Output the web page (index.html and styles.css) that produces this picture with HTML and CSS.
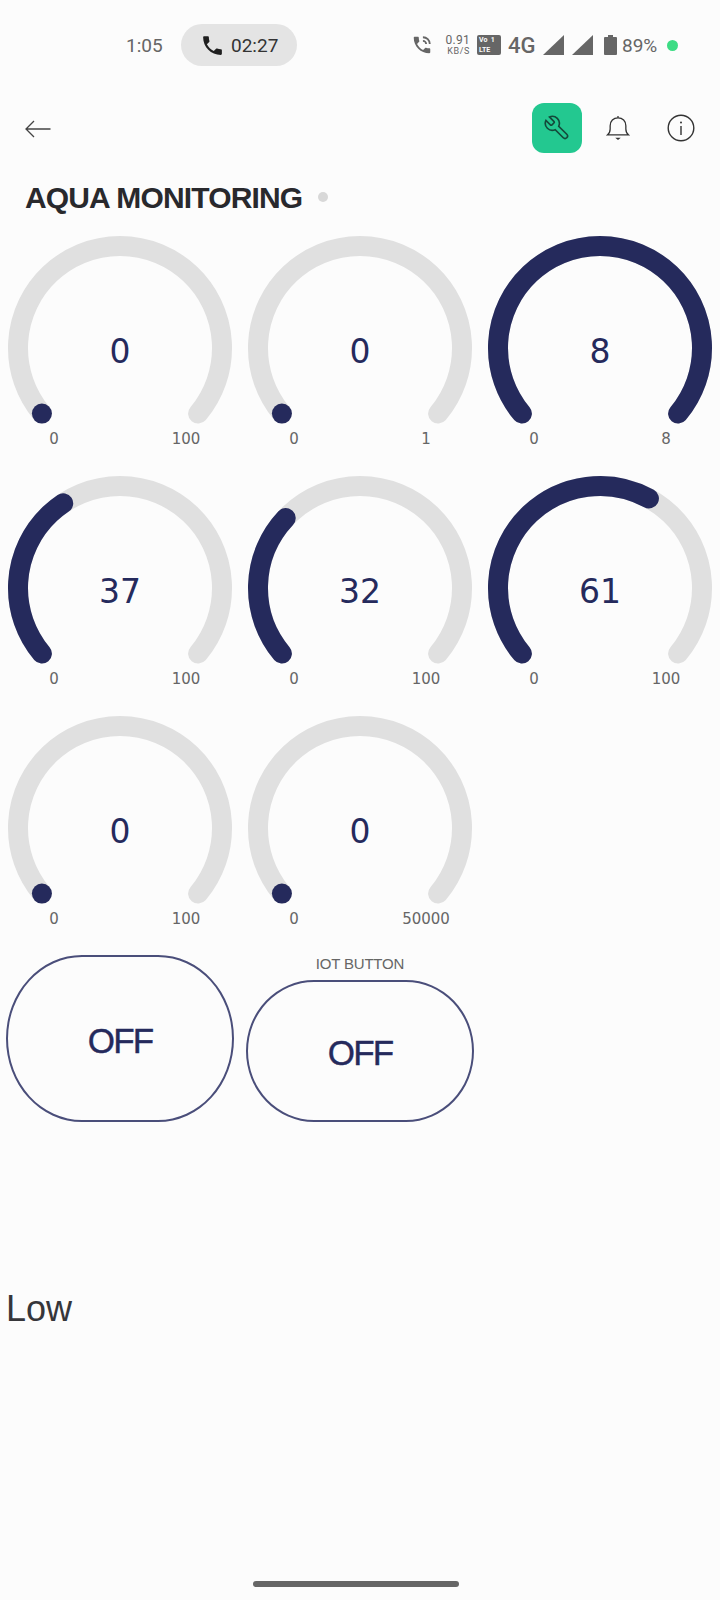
FILE: index.html
```html
<!DOCTYPE html>
<html lang="en">
<head>
    <meta charset="UTF-8">
    <meta name="viewport" content="width=device-width, initial-scale=1.0">
    <title>Aqua Monitoring</title>
    <link rel="stylesheet" href="styles.css">
</head>
<body>
    <div class="status-bar">
        <span class="clock">1:05</span>
        <div class="call-pill">
            <svg class="call-icon" viewBox="0 0 24 24"><path d="M6.62 10.79c1.44 2.83 3.76 5.14 6.59 6.59l2.2-2.2c.27-.27.67-.36 1.02-.24 1.12.37 2.33.57 3.57.57.55 0 1 .45 1 1V20c0 .55-.45 1-1 1-9.39 0-17-7.61-17-17 0-.55.45-1 1-1h3.5c.55 0 1 .45 1 1 0 1.25.2 2.45.57 3.57.11.35.03.74-.25 1.02l-2.2 2.2z"/></svg>
            <span>02:27</span>
        </div>
        <div class="status-right">
            <svg class="wifi-call" viewBox="0 0 24 24">
                <path d="M6.62 10.79c1.44 2.83 3.76 5.14 6.59 6.59l2.2-2.2c.27-.27.67-.36 1.02-.24 1.12.37 2.33.57 3.57.57.55 0 1 .45 1 1V20c0 .55-.45 1-1 1-9.39 0-17-7.61-17-17 0-.55.45-1 1-1h3.5c.55 0 1 .45 1 1 0 1.25.2 2.45.57 3.57.11.35.03.74-.25 1.02l-2.2 2.2z"/>
                <path class="wifi-arc" d="M13 3.5a7.5 7.5 0 0 1 7.5 7.5M13 7.5a3.5 3.5 0 0 1 3.5 3.5"/>
            </svg>
            <div class="net-speed"><span>0.91</span><small>KB/S</small></div>
            <div class="volte"><span>Vo&nbsp;&nbsp;1</span><span>LTE</span></div>
            <span class="net-type">4G</span>
            <svg class="signal" viewBox="0 0 21 20"><path d="M21 0v20H0z"/></svg>
            <svg class="signal" viewBox="0 0 21 20"><path d="M21 0v20H0z"/></svg>
            <svg class="battery" viewBox="0 0 13 20"><path d="M4 0h5v2h3a1 1 0 0 1 1 1v16a1 1 0 0 1-1 1H1a1 1 0 0 1-1-1V3a1 1 0 0 1 1-1h3z"/></svg>
            <span class="battery-level">89%</span>
            <span class="green-dot"></span>
        </div>
    </div>

    <div class="top-bar">
        <svg class="back-icon" viewBox="0 0 26 18"><path d="M25.5 9H1M9 1L1 9l8 8"/></svg>
        <div class="top-actions">
            <div class="wrench-btn">
                <svg viewBox="0 0 24 24"><g transform="translate(24 0) scale(-1 1)"><path d="M14.7 6.3a1 1 0 0 0 0 1.4l1.6 1.6a1 1 0 0 0 1.4 0l3.77-3.77a6 6 0 0 1-7.94 7.94l-6.91 6.91a2.12 2.12 0 0 1-3-3l6.91-6.91a6 6 0 0 1 7.94-7.94l-3.76 3.76z"/></g></svg>
            </div>
            <svg class="bell-icon" viewBox="0 0 26 28">
                <path d="M1.5 21.5c2.2-1.6 3-3.2 3-6.5v-3.5C4.500 6.500 8 3 13 3s8.500 3.500 8.500 8.500V15c0 3.300.8 4.900 3 6.500z"/>
                <path d="M13 1v2"/>
                <path class="bell-clapper" d="M10 24.500h6l-3 2.500z"/>
            </svg>
            <svg class="info-icon" viewBox="0 0 28 28">
                <circle cx="14" cy="14" r="12.800"/>
                <path d="M14 12v9"/>
                <circle class="info-dot" cx="14" cy="8.500" r="1"/>
            </svg>
        </div>
    </div>

    <div class="page-title">
        <h1>AQUA MONITORING</h1>
        <span class="online-dot"></span>
    </div>

    <div class="gauge-grid">
        <div class="gauge">
            <svg viewBox="0 0 240 200"><path class="track" d="M41.900 185.600A102 102 0 1 1 198.100 185.600"/><path class="fill" pathLength="100" stroke-dasharray="0 100" d="M41.900 185.600A102 102 0 1 1 198.100 185.600"/></svg>
            <div class="gauge-value">0</div>
            <div class="gauge-range"><span>0</span><span>100</span></div>
        </div>
        <div class="gauge">
            <svg viewBox="0 0 240 200"><path class="track" d="M41.900 185.600A102 102 0 1 1 198.100 185.600"/><path class="fill" pathLength="100" stroke-dasharray="0 100" d="M41.900 185.600A102 102 0 1 1 198.100 185.600"/></svg>
            <div class="gauge-value">0</div>
            <div class="gauge-range"><span>0</span><span>1</span></div>
        </div>
        <div class="gauge">
            <svg viewBox="0 0 240 200"><path class="track" d="M41.900 185.600A102 102 0 1 1 198.100 185.600"/><path class="fill" pathLength="100" stroke-dasharray="100 100" d="M41.900 185.600A102 102 0 1 1 198.100 185.600"/></svg>
            <div class="gauge-value">8</div>
            <div class="gauge-range"><span>0</span><span>8</span></div>
        </div>
        <div class="gauge">
            <svg viewBox="0 0 240 200"><path class="track" d="M41.900 185.600A102 102 0 1 1 198.100 185.600"/><path class="fill" pathLength="100" stroke-dasharray="37 100" d="M41.900 185.600A102 102 0 1 1 198.100 185.600"/></svg>
            <div class="gauge-value">37</div>
            <div class="gauge-range"><span>0</span><span>100</span></div>
        </div>
        <div class="gauge">
            <svg viewBox="0 0 240 200"><path class="track" d="M41.900 185.600A102 102 0 1 1 198.100 185.600"/><path class="fill" pathLength="100" stroke-dasharray="32 100" d="M41.900 185.600A102 102 0 1 1 198.100 185.600"/></svg>
            <div class="gauge-value">32</div>
            <div class="gauge-range"><span>0</span><span>100</span></div>
        </div>
        <div class="gauge">
            <svg viewBox="0 0 240 200"><path class="track" d="M41.900 185.600A102 102 0 1 1 198.100 185.600"/><path class="fill" pathLength="100" stroke-dasharray="61 100" d="M41.900 185.600A102 102 0 1 1 198.100 185.600"/></svg>
            <div class="gauge-value">61</div>
            <div class="gauge-range"><span>0</span><span>100</span></div>
        </div>
        <div class="gauge">
            <svg viewBox="0 0 240 200"><path class="track" d="M41.900 185.600A102 102 0 1 1 198.100 185.600"/><path class="fill" pathLength="100" stroke-dasharray="0 100" d="M41.900 185.600A102 102 0 1 1 198.100 185.600"/></svg>
            <div class="gauge-value">0</div>
            <div class="gauge-range"><span>0</span><span>100</span></div>
        </div>
        <div class="gauge">
            <svg viewBox="0 0 240 200"><path class="track" d="M41.900 185.600A102 102 0 1 1 198.100 185.600"/><path class="fill" pathLength="100" stroke-dasharray="0 100" d="M41.900 185.600A102 102 0 1 1 198.100 185.600"/></svg>
            <div class="gauge-value">0</div>
            <div class="gauge-range"><span>0</span><span>50000</span></div>
        </div>
    </div>

    <div class="button-row">
        <div class="switch-cell">
            <button class="switch-btn">OFF</button>
        </div>
        <div class="switch-cell">
            <div class="switch-label">IOT BUTTON</div>
            <button class="switch-btn switch-btn-small">OFF</button>
        </div>
    </div>

    <div class="level-text">Low</div>

    <div class="home-bar"></div>
</body>
</html>
```

FILE: styles.css
```css
* { box-sizing: border-box; }
html, body { height: 100%; }
body { margin: 0; width: 720px; height: 1600px; background-color: #fcfcfc; font-family: "Liberation Sans", Arial, sans-serif;
       display: flex; flex-direction: column; overflow: hidden; }

.status-bar { height: 90px; flex: none; display: flex; align-items: center; padding-left: 126px; font-family: Roboto, sans-serif; color: #666; }
.clock { font-size: 19px; width: 55px; }
.call-pill { width: 116px; height: 42px; border-radius: 21px; background-color: #e4e4e4; color: #333; font-size: 19px;
             display: flex; align-items: center; padding-left: 19px; gap: 6px; }
.call-icon { width: 25px; height: 25px; fill: #1f1f1f; }
.status-right { margin-left: 114px; display: flex; align-items: center; }
.wifi-call { width: 22px; height: 22px; fill: #666; }
.wifi-arc { fill: none; stroke: #666; stroke-width: 2; }
.net-speed { width: 32px; margin-left: 10px; display: flex; flex-direction: column; align-items: flex-end; font-size: 12px; line-height: 13px; padding-right: 5px; letter-spacing: .3px; }
.net-speed small { font-size: 9px; line-height: 9px; letter-spacing: .6px; }
.volte { width: 24px; height: 20px; margin-left: 2px; border-radius: 2px; background-color: #666; color: #fcfcfc; font-size: 7px; font-weight: 700;
         line-height: 9px; padding: 1px 2px; display: flex; flex-direction: column; gap: 1px; }
.net-type { font-size: 22px; font-weight: 500; margin-left: 7px; width: 35px; }
.signal { width: 21px; height: 20px; fill: #666; margin-right: 8px; }
.battery { width: 13px; height: 20px; fill: #666; margin-left: 3px; }
.battery-level { font-size: 19px; margin-left: 5px; width: 44px; }
.green-dot { width: 11px; height: 11px; border-radius: 50%; background-color: #3ddc84; margin-left: 1px; }

.top-bar { height: 80px; flex: none; display: flex; align-items: center; justify-content: space-between; padding: 0 25px 0 25px; }
.back-icon { width: 26px; height: 18px; margin-top: -3px; fill: none; stroke: #444; stroke-width: 1.3; }
.top-actions { display: flex; align-items: center; margin-top: -5px; }
.wrench-btn { width: 50px; height: 50px; border-radius: 12px; background-color: #23c890; display: flex; align-items: center; justify-content: center; }
.wrench-btn svg { width: 28px; height: 28px; fill: none; stroke: #14493a; stroke-width: 1.400; }
.bell-icon { width: 24px; height: 26px; margin-left: 24px; fill: none; stroke: #333; stroke-width: 1.400; }
.bell-clapper { fill: #333; stroke: none; }
.info-icon { width: 28px; height: 28px; margin-left: 37px; fill: none; stroke: #333; stroke-width: 1.400; }
.info-dot { fill: #333; stroke: none; }

.page-title { height: 58px; flex: none; display: flex; align-items: flex-start; padding-left: 25px; }
.page-title h1 { margin: 0; font-size: 30px; line-height: 55px; font-weight: 700; letter-spacing: -.85px; color: #29292d; }
.online-dot { width: 10px; height: 10px; border-radius: 50%; background-color: #d8d8d8; margin: 22px 0 0 16px; }

.gauge-grid { display: grid; grid-template-columns: repeat(3, 240px); grid-auto-rows: 240px; flex: none; }
.gauge { position: relative; }
.gauge svg { display: block; width: 240px; height: 200px; fill: none; stroke-width: 20; stroke-linecap: round; }
.track { stroke: #e0e0e0; }
.fill { stroke: #252a5c; }
.gauge-value { position: absolute; top: 102px; left: 0; right: 0; text-align: center; font-family: "DejaVu Sans", sans-serif; font-size: 33px; line-height: 44px; color: #252a5c; }
.gauge-range { display: flex; justify-content: space-between; padding: 1px 14px 0; font-family: "DejaVu Sans", sans-serif; font-size: 15px; line-height: 20px; color: #666; }
.gauge-range span { width: 80px; text-align: center; }

.button-row { display: grid; grid-template-columns: repeat(3, 240px); height: 174px; flex: none; }
.switch-cell { display: flex; flex-direction: column; justify-content: flex-end; align-items: center; }
.switch-cell:first-child { padding-top: 7px; }
.switch-label { font-size: 15px; line-height: 18px; color: #666; letter-spacing: -.2px; margin-bottom: 7px; }
.switch-btn { flex: 1; width: 228px; border: 2px solid #4a4e7a; border-radius: 76px / 50%; background: none; padding: 4px 0 0; font-family: "Liberation Sans", Arial, sans-serif; font-size: 35px; letter-spacing: -1.8px; color: #252a5c; -webkit-text-stroke: .4px #252a5c; }
.switch-btn-small { flex: none; height: 142px; border-radius: 68px / 50%; }

.level-text { margin: 163px 0 0 6px; font-size: 36px; line-height: 48px; color: #36363a; }

.home-bar { width: 206px; height: 6px; border-radius: 3px; background-color: #666; margin: auto 0 13px 253px; flex: none; }
```
